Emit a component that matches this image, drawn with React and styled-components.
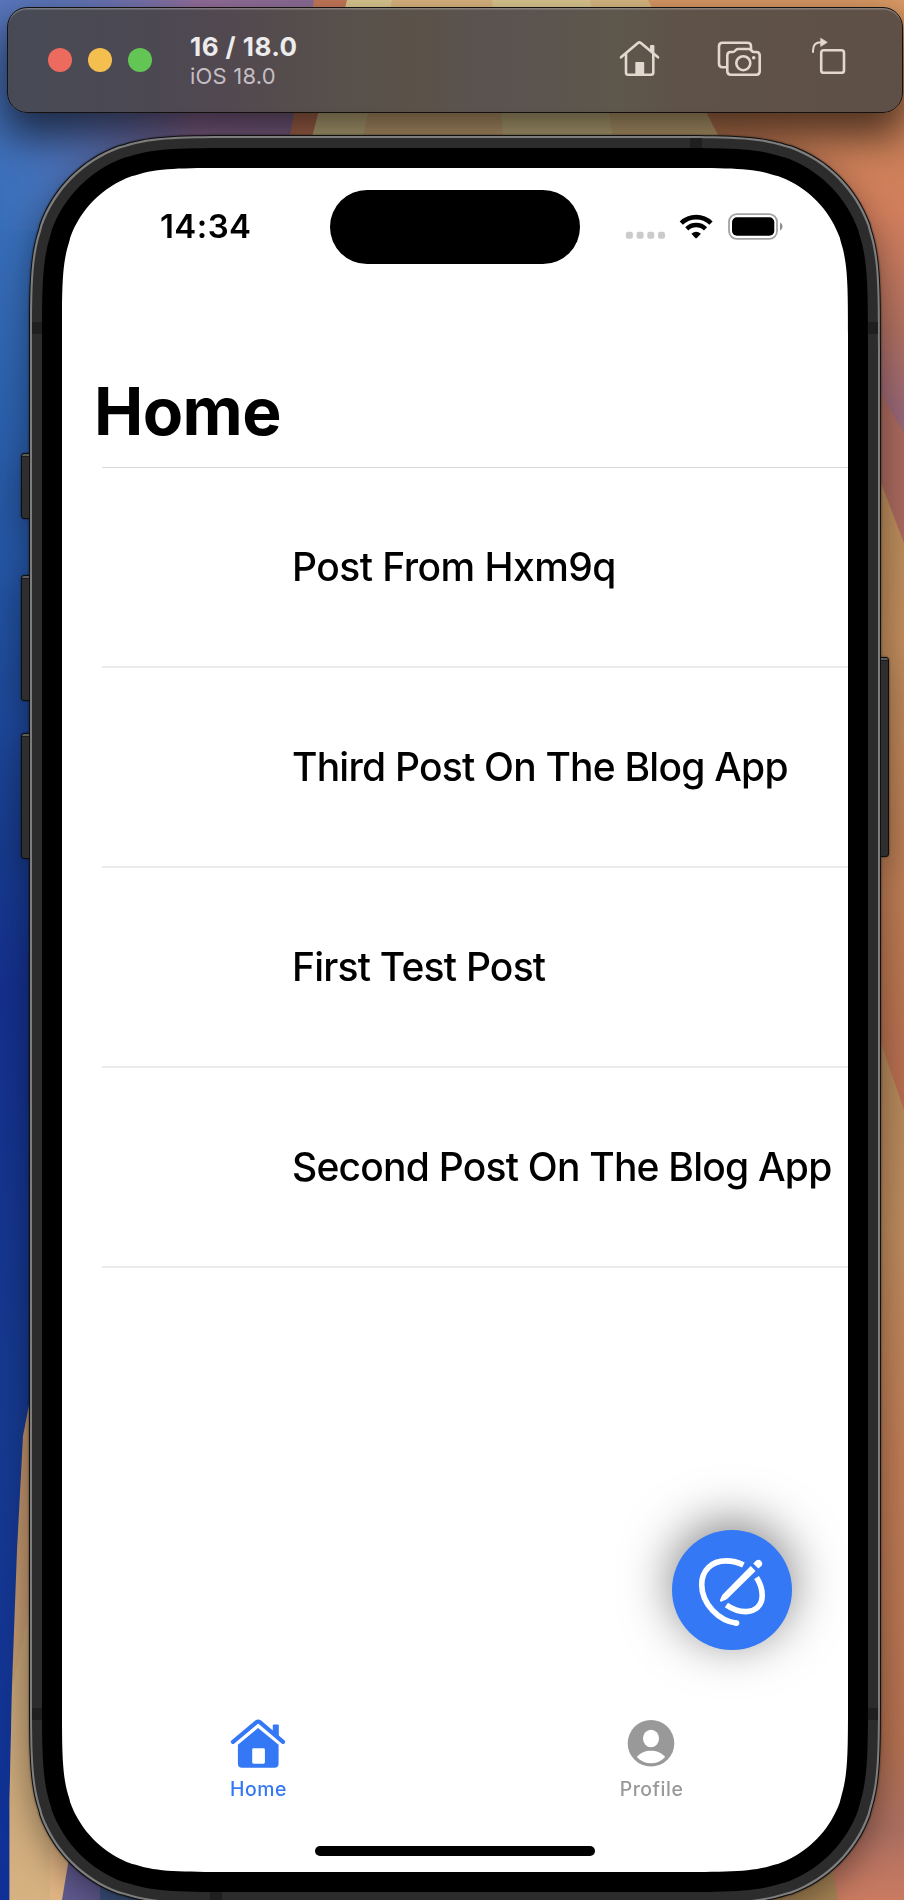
import React from "react";
import styled, { createGlobalStyle } from "styled-components";

const GlobalStyle = createGlobalStyle`
  * { box-sizing: border-box; }
  html, body { margin: 0; padding: 0; background: #16357f; }
  body { width: 904px; height: 1900px; overflow: hidden; }
`;

// Continuous-curvature rounded rectangle, as used for device corners.
const squircle = (w, h, r) => {
  const a = 1.528665 * r, b = 1.088493 * r, c = 0.868407 * r, d = 0.669934 * r;
  const e = 0.065496 * r, f = 0.631494 * r, g = 0.074911 * r, i = 0.372824 * r, j = 0.16906 * r;
  return [
    `M${a} 0 L${w - a} 0`,
    `C${w - b} 0 ${w - c} 0 ${w - d} ${e} L${w - f} ${g}`,
    `C${w - i} ${j} ${w - j} ${i} ${w - g} ${f}`,
    `L${w - e} ${d} C${w} ${c} ${w} ${b} ${w} ${a}`,
    `L${w} ${h - a} C${w} ${h - b} ${w} ${h - c} ${w - e} ${h - d} L${w - g} ${h - f}`,
    `C${w - j} ${h - i} ${w - i} ${h - j} ${w - f} ${h - g}`,
    `L${w - d} ${h - e} C${w - c} ${h} ${w - b} ${h} ${w - a} ${h}`,
    `L${a} ${h} C${b} ${h} ${c} ${h} ${d} ${h - e} L${f} ${h - g}`,
    `C${i} ${h - j} ${j} ${h - i} ${g} ${h - f}`,
    `L${e} ${h - d} C0 ${h - c} 0 ${h - b} 0 ${h - a}`,
    `L0 ${a} C0 ${b} 0 ${c} ${e} ${d} L${g} ${f}`,
    `C${j} ${i} ${i} ${j} ${f} ${g} L${d} ${e} C${c} 0 ${b} 0 ${a} 0 Z`,
  ].join(" ");
};

const Desktop = styled.main`
  position: relative;
  width: 904px;
  height: 1900px;
  overflow: hidden;
  padding: 7px 1px 0 7px;
  font-family: Inter, "Liberation Sans", sans-serif;
`;

const WallpaperSvg = styled.svg`
  position: absolute;
  inset: 0;
`;

const Toolbar = styled.header`
  position: relative;
  display: flex;
  align-items: center;
  width: 896px;
  height: 106px;
  padding: 0 50px 0 40px;
  border: 1px solid #14110f;
  border-radius: 20px;
  background: linear-gradient(90deg, #474a55 0%, #4c4852 17%, #53494f 26%, #57514b 38%, #5b5249 46%, #5a5350 55%, #5e574c 68%, #5f5248 76%, #5e5047 100%);
  box-shadow: inset 0 2px 1px -0.5px rgba(255, 255, 255, 0.28), 0 20px 40px 4px rgba(0, 0, 0, 0.62);
`;

const TrafficLights = styled.div`
  display: flex;
  gap: 16px;
`;

const Light = styled.span`
  width: 24px;
  height: 24px;
  border-radius: 50%;
  background: ${(p) => p.$color};
`;

const WindowTitle = styled.div`
  display: flex;
  flex-direction: column;
  margin-left: 38px;
  flex: 1;
  white-space: nowrap;
`;

const DeviceName = styled.strong`
  font-size: 26px;
  line-height: 31px;
  font-weight: 700;
  letter-spacing: 0.45px;
  color: #ececec;
`;

const OsVersion = styled.span`
  font-size: 22px;
  line-height: 28px;
  letter-spacing: 0.2px;
  color: #c5bdc4;
`;

const Tools = styled.div`
  display: flex;
  align-items: flex-start;
  padding-bottom: 4px;
  color: #e2d8d0;
`;

const ToolIcon = styled.svg`
  display: block;
  margin-right: ${(p) => p.$after || 0}px;
  fill: none;
  stroke: currentColor;
  stroke-width: 2.6;
  stroke-linecap: round;
  stroke-linejoin: round;
`;

const Phone = styled.section`
  position: relative;
  width: 852px;
  margin: 22px 0 0 22px;
  filter: drop-shadow(0 0 1px rgba(0, 0, 0, 0.55)) drop-shadow(0 10px 16px rgba(0, 0, 0, 0.38));
`;

const SideButton = styled.span`
  position: absolute;
  ${(p) => p.$side}: -8px;
  top: ${(p) => p.$top}px;
  width: 14px;
  height: ${(p) => p.$height}px;
  border: 1px solid #0d0d0d;
  border-radius: 3px;
  background: linear-gradient(#5c5c5c 0 2px, #1c1c1c 2px 3px, #2e2e2e 3px);
`;

const Shell = styled.div`
  padding: ${(p) => p.$pad}px;
  background: ${(p) => p.$color};
  width: ${(p) => p.$w}px;
  height: ${(p) => p.$h}px;
  clip-path: path("${(p) => squircle(p.$w, p.$h, p.$r)}");
`;

const AntennaBand = styled.span`
  position: absolute;
  left: ${(p) => p.$x}px;
  top: ${(p) => p.$y}px;
  width: ${(p) => (p.$vertical ? 12 : 10)}px;
  height: ${(p) => (p.$vertical ? 10 : 12)}px;
  background: #1f1f1f;
`;

const Screen = styled.div`
  position: relative;
  display: flex;
  flex-direction: column;
  width: 786px;
  height: 1704px;
  background: #fff;
  color: #000;
  clip-path: path("${squircle(786, 1704, 110)}");
`;

const StatusBar = styled.div`
  display: flex;
  align-items: flex-start;
  height: 108px;
  padding: 22px 65px 0 98px;
`;

const Time = styled.time`
  width: 170px;
  padding-top: 16px;
  font-size: 33px;
  line-height: 40px;
  font-weight: 600;
  letter-spacing: 0.4px;
`;

const Island = styled.div`
  width: 250px;
  height: 74px;
  border-radius: 37px;
  background: #000;
`;

const StatusIcons = styled.svg`
  margin-left: auto;
  margin-top: 21px;
`;

const PageTitle = styled.h1`
  margin: 95px 0 0 32px;
  height: 96px;
  font-size: 66px;
  line-height: 80px;
  font-weight: 700;
  letter-spacing: -0.6px;
`;

const PostList = styled.ul`
  list-style: none;
  margin: 0 0 0 40px;
  padding: 0;
  border-top: 1px solid #dadada;
`;

const PostRow = styled.li`
  display: flex;
  align-items: center;
  height: 200px;
  padding-left: 190px;
  border-bottom: 2px solid #ebebeb;
  font-size: 39px;
  line-height: 48px;
  font-weight: 500;
  letter-spacing: ${(p) => p.$spacing}px;
  white-space: nowrap;
`;

const ComposeButton = styled.button`
  position: absolute;
  right: 56px;
  bottom: 222px;
  width: 120px;
  height: 120px;
  padding: 0;
  border: 0;
  border-radius: 50%;
  background: #3478f6;
  box-shadow: 0 -8px 50px rgba(0, 0, 0, 0.5);
`;

const TabBar = styled.nav`
  display: flex;
  margin-top: auto;
  height: 126px;
`;

const Tab = styled.a`
  flex: 1;
  display: flex;
  flex-direction: column;
  align-items: center;
  color: ${(p) => (p.$active ? "#3478f6" : "#999999")};
  font-size: 19.4px;
  line-height: 24px;
  font-weight: 500;
  letter-spacing: 0.55px;
`;

const TabIcon = styled.svg`
  display: block;
  margin: 0 1px 7px 0;
`;

const HomeIndicator = styled.div`
  width: 280px;
  height: 10px;
  margin: 4px auto 16px;
  border-radius: 5px;
  background: #000;
`;

const Wallpaper = () => (
  <WallpaperSvg width="904" height="1900" viewBox="0 0 904 1900" aria-hidden="true">
    <defs>
      <linearGradient id="left" x1="0" y1="0" x2="0" y2="1">
        <stop offset="0" stopColor="#5b78be" />
        <stop offset="0.05" stopColor="#4670bb" />
        <stop offset="0.1" stopColor="#3a70ba" />
        <stop offset="0.2" stopColor="#2d62ad" />
        <stop offset="0.33" stopColor="#2150a0" />
        <stop offset="0.45" stopColor="#173a8d" />
        <stop offset="0.52" stopColor="#142f8c" />
        <stop offset="0.75" stopColor="#163a90" />
        <stop offset="1" stopColor="#0f3096" />
      </linearGradient>
      <linearGradient id="top" x1="0" y1="0" x2="1" y2="0">
        <stop offset="0" stopColor="#5b78be" stopOpacity="0" />
        <stop offset="0.6" stopColor="#96709e" />
        <stop offset="1" stopColor="#8d6e98" />
      </linearGradient>
      <linearGradient id="right" gradientUnits="userSpaceOnUse" x1="0" y1="0" x2="0" y2="560">
        <stop offset="0" stopColor="#dd9c66" />
        <stop offset="0.2" stopColor="#cd8458" />
        <stop offset="0.38" stopColor="#d17e5c" />
        <stop offset="0.58" stopColor="#b0705f" />
        <stop offset="0.75" stopColor="#946578" />
        <stop offset="1" stopColor="#9d6673" />
      </linearGradient>
      <linearGradient id="facetA" x1="0" y1="0" x2="0" y2="1">
        <stop offset="0" stopColor="#b58a59" />
        <stop offset="0.35" stopColor="#c08a5b" />
        <stop offset="0.8" stopColor="#b8744f" />
        <stop offset="1" stopColor="#b56a50" />
      </linearGradient>
      <linearGradient id="facetB" x1="0" y1="0" x2="0" y2="1">
        <stop offset="0" stopColor="#af8558" />
        <stop offset="0.25" stopColor="#bc8a5c" />
        <stop offset="0.5" stopColor="#bd7b54" />
        <stop offset="0.82" stopColor="#b47150" />
        <stop offset="0.92" stopColor="#aa6e60" />
        <stop offset="1" stopColor="#ca7b61" />
      </linearGradient>
      <linearGradient id="sand" x1="0" y1="0" x2="0" y2="1">
        <stop offset="0" stopColor="#b98a63" />
        <stop offset="0.6" stopColor="#c29c73" />
        <stop offset="1" stopColor="#e2b584" />
      </linearGradient>
    </defs>
    <rect width="904" height="1900" fill="url(#left)" />
    <rect width="330" height="230" fill="url(#top)" />
    <path d="M314 0H904V700H190Z" fill="#c87a5b" />
    <path d="M347 0H904V400H245Z" fill="#dfcb92" />
    <path d="M392 0H904V400H307Z" fill="#dfb882" />
    <path d="M492 0H904V300H516Z" fill="#dfca92" />
    <path d="M590 0H904V300H640Z" fill="#dcbc84" />
    <path d="M648 0L718 135V560H904V0Z" fill="url(#right)" />
    <path d="M870 375L904 433V700H870Z" fill="#a8685c" />
    <path d="M870 454L904 543V1120H870Z" fill="url(#facetA)" />
    <path d="M868 1005L904 1110V1900H650V1700H868Z" fill="url(#facetB)" />
    <path d="M700 1860H831L838 1900H700Z" fill="#a78455" />
    <path d="M40 1380L29 1405L23 1436L17 1550L12 1685L9.5 1800V1900H80V1380Z" fill="url(#sand)" />
    <path d="M29 1612L12 1690L9.5 1800V1900H50V1612Z" fill="#c5ad7d" fillOpacity="0.4" />
    <path d="M70 1852L62 1900H210V1852Z" fill="#605a90" />
    <path d="M100 1870V1900H210V1870Z" fill="#3b517d" />
  </WallpaperSvg>
);

const HomeTool = () => (
  <ToolIcon $after={53} width="44" height="44" viewBox="0 0 44 44">
    <path d="M4 21.3L20.9 6.9Q22.4 5.7 23.9 6.9L41 21.3" />
    <path d="M9 18V36.5Q9 38.7 11.2 38.7H34Q36.3 38.7 36.3 36.5V18" />
    <path d="M18.3 38V26.8Q18.3 26 19.1 26H26.4Q27.2 26 27.2 26.8V38Z" fill="currentColor" stroke="none" />
    <path d="M33 14V10Q33 9 34 9H36.4Q37.4 9 37.4 10V18Z" fill="currentColor" stroke="none" />
  </ToolIcon>
);

const ScreenshotTool = () => (
  <ToolIcon $after={42} width="52" height="44" viewBox="0 0 52 44">
    <path d="M12.5 31.3H8.6Q5 31.3 5 27.7V10.3Q5 6.7 8.6 6.7H33.4Q37 6.7 37 10.3V13.5" />
    <path d="M16.5 16H18.8Q20 16 20.9 15L22 13.8Q22.8 13 24 13H34.8Q36 13 36.8 13.8L37.9 15Q38.8 16 40 16H42.3Q45.7 16 45.7 19.4V35.3Q45.7 38.7 42.3 38.7H16.8Q13.3 38.7 13.3 35.3V19.4Q13.3 16 16.5 16Z" />
    <circle cx="29.3" cy="27.2" r="7" />
    <circle cx="39.7" cy="21.7" r="1.8" fill="currentColor" stroke="none" />
  </ToolIcon>
);

const RotateTool = () => (
  <ToolIcon width="44" height="44" viewBox="0 2 44 44">
    <rect x="13.2" y="16.2" width="22.8" height="22.6" rx="2.6" />
    <path d="M5 18V16.5Q5 8.3 13 8.3" strokeWidth="2" />
    <path d="M13 4.5L19.2 8.3L13 12.2Z" fill="currentColor" strokeWidth="0.8" />
  </ToolIcon>
);

const StatusGlyphs = () => (
  <StatusIcons width="160" height="32" viewBox="0 0 160 32">
    {[0, 1, 2, 3].map((n) => (
      <rect key={n} x={2.9 + n * 10.7} y="20.8" width="7" height="7" rx="2.2" fill="#cbcbcb" />
    ))}
    <g fill="none" stroke="#000">
      <path d="M58.3 12.2A21.2 21.2 0 0 1 88 12.2" strokeWidth="4.6" />
      <path d="M63.8 17.8A13.4 13.4 0 0 1 82.5 17.8" strokeWidth="4.4" />
    </g>
    <path d="M68.4 22.7Q73.1 18.6 77.9 22.7L73.9 26.9Q73.1 27.7 72.3 26.9Z" />
    <rect x="106" y="3.2" width="48" height="24.6" rx="7.8" fill="none" stroke="#a3a3a3" strokeWidth="1.8" />
    <rect x="109" y="6.3" width="42.3" height="18.5" rx="5" />
    <path d="M157 11.6Q159.6 12.6 159.6 15.5T157 19.4Z" fill="#8f8f8f" />
  </StatusIcons>
);

const HomeTabIcon = () => (
  <TabIcon width="60" height="54" viewBox="0 0 60 54" fill="currentColor">
    <path d="M5 25.8L28.6 6.2Q30.2 4.9 31.8 6.2L55 25.8" fill="none" stroke="currentColor" strokeWidth="4.2" strokeLinecap="round" strokeLinejoin="round" />
    <path d="M44.8 17V9.6Q44.8 8.4 46 8.4H49.6Q50.8 8.4 50.8 9.6V23Z" />
    <path fillRule="evenodd" d="M30.1 12L50.6 28.8V47.4Q50.6 51.7 46.3 51.7H14.2Q9.9 51.7 9.9 47.4V28.8ZM25.6 32.3Q24.2 32.3 24.2 33.7V46.3Q24.2 47.7 25.6 47.7H35.5Q36.9 47.7 36.9 46.3V33.7Q36.9 32.3 35.5 32.3Z" />
  </TabIcon>
);

const ProfileTabIcon = () => (
  <TabIcon width="60" height="54" viewBox="0 0 60 54">
    <circle cx="30" cy="27.3" r="23.3" fill="currentColor" />
    <ellipse cx="30" cy="22.5" rx="8" ry="8.7" fill="#fff" />
    <path d="M15.8 41C19.5 36.6 24.7 34.8 30 34.8S40.5 36.6 44.2 41C40.4 45.1 35.4 47.3 30 47.3S19.6 45.1 15.8 41Z" fill="#fff" />
  </TabIcon>
);

const ComposeIcon = () => (
  <svg width="120" height="120" viewBox="0 0 120 120">
    <g fill="none" stroke="#fff" strokeWidth="5.6">
      <path d="M71.4 35C66 32.2 60.5 30.9 54 30.9C39.5 30.9 29.7 40.5 29.7 54.5C29.7 74 47 91 64.7 93.2" />
      <path d="M84.6 47.5C88.4 53.5 90.2 59.5 90.2 65.5C90.2 75.5 83.5 81.6 73.8 81.6C66.8 81.6 60 79 54.4 75" />
    </g>
    <circle cx="64.6" cy="93.1" r="2.8" fill="#fff" />
    <path d="M48.6 71.5Q47.6 71 48 69.9L50 65.6Q50.3 64.8 50.9 64.2L78.7 36L83.6 40.9L55.6 68.5L54.3 69.4L49.8 71.5Q49.2 71.8 48.6 71.5Z" fill="#fff" />
    <path d="M81.2 33.4L84.2 30.6A3.8 3.8 0 0 1 89.4 36L86.4 38.6Z" fill="#fff" />
  </svg>
);

const posts = [
  { title: "Post From Hxm9q", spacing: -0.54 },
  { title: "Third Post On The Blog App", spacing: -0.78 },
  { title: "First Test Post", spacing: -0.79 },
  { title: "Second Post On The Blog App", spacing: -0.78 },
];

export default function App() {
  return (
    <>
      <GlobalStyle />
      <Desktop>
        <Wallpaper />
        <Toolbar>
          <TrafficLights>
            <Light $color="#ed6a5e" />
            <Light $color="#f5bf4f" />
            <Light $color="#62c554" />
          </TrafficLights>
          <WindowTitle>
            <DeviceName>16 / 18.0</DeviceName>
            <OsVersion>iOS 18.0</OsVersion>
          </WindowTitle>
          <Tools>
            <HomeTool />
            <ScreenshotTool />
            <RotateTool />
          </Tools>
        </Toolbar>
        <Phone>
          <SideButton $side="left" $top={318} $height={66} />
          <SideButton $side="left" $top={440} $height={126} />
          <SideButton $side="left" $top={598} $height={126} />
          <SideButton $side="right" $top={522} $height={200} />
          <Shell $color="#101010" $pad={1} $w={852} $h={1770} $r={141}>
            <Shell $color="#7d7d7d" $pad={2} $w={850} $h={1768} $r={140}>
              <Shell $color="#2c2c2c" $pad={10} $w={846} $h={1764} $r={139}>
                <AntennaBand $vertical $x={661} $y={3} />
                <AntennaBand $vertical $x={181} $y={1757} />
                <AntennaBand $x={3} $y={187} />
                <AntennaBand $x={839} $y={187} />
                <AntennaBand $x={3} $y={1573} />
                <AntennaBand $x={839} $y={1573} />
                <Shell $color="#000" $pad={20} $w={826} $h={1744} $r={130}>
                  <Screen>
                    <StatusBar>
                      <Time>14:34</Time>
                      <Island />
                      <StatusGlyphs />
                    </StatusBar>
                    <PageTitle>Home</PageTitle>
                    <PostList>
                      {posts.map((post) => (
                        <PostRow key={post.title} $spacing={post.spacing}>{post.title}</PostRow>
                      ))}
                    </PostList>
                    <TabBar>
                      <Tab $active>
                        <HomeTabIcon />
                        Home
                      </Tab>
                      <Tab>
                        <ProfileTabIcon />
                        Profile
                      </Tab>
                    </TabBar>
                    <HomeIndicator />
                    <ComposeButton aria-label="New post">
                      <ComposeIcon />
                    </ComposeButton>
                  </Screen>
                </Shell>
              </Shell>
            </Shell>
          </Shell>
        </Phone>
      </Desktop>
    </>
  );
}
